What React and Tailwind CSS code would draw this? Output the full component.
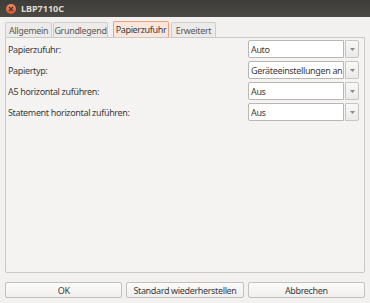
import React from "react";

const font = { fontFamily: '"Noto Sans", "DejaVu Sans", sans-serif' };

function Combo({ value }) {
  return (
    <div className="flex h-[18px] w-[111px]">
      <div className="flex-1 flex items-center border border-[#b9b7b3] bg-white pl-[2px] rounded-l-[2px] overflow-hidden whitespace-nowrap text-[#3c3c3c]">
        {value}
      </div>
      <div className="w-[14px] ml-[1px] border border-[#c7c5c1] bg-gradient-to-b from-[#f8f8f7] to-[#ebeae8] rounded-r-[2px] flex items-center justify-center">
        <svg width="5" height="3" viewBox="0 0 5 3"><path d="M0 0h5L2.5 3z" fill="#8a8a8a" /></svg>
      </div>
    </div>
  );
}

function Row({ label, value }) {
  return (
    <div className="flex items-center justify-between h-[18px]">
      <span className="pl-[1px] text-[#3c3c3c]">{label}</span>
      <Combo value={value} />
    </div>
  );
}

function Tab({ children, active, w }) {
  return active ? (
    <div className={`h-[17px] flex items-center justify-center border border-[#f0a080] bg-[#fbe6da] rounded-t-[2px] text-[#3c3c3c] -mb-px ${w}`}>
      {children}
    </div>
  ) : (
    <div className={`h-[15px] flex items-center justify-center border border-[#cfcdca] border-b-0 bg-[#ecebe9] rounded-t-[2px] text-[#5a5a5a] ${w}`}>
      {children}
    </div>
  );
}

function Btn({ children }) {
  return (
    <div className="h-[16px] flex-1 flex items-center justify-center border border-[#c3c1bd] bg-gradient-to-b from-[#fbfbfa] to-[#f0efed] rounded-[2px] text-[#3c3c3c]">
      {children}
    </div>
  );
}

export default function App() {
  return (
    <div className="w-[370px] h-[303px] bg-[#f2f1f0] flex flex-col text-[9px] leading-none tracking-[-0.35px]" style={font}>
      <div className="h-[17px] bg-gradient-to-b from-[#3d3c38] to-[#4a4944] flex items-center pl-[6px]">
        <div className="w-[10px] h-[10px] rounded-full bg-gradient-to-b from-[#f58a5c] to-[#e0502a] flex items-center justify-center">
          <svg width="6" height="6" viewBox="0 0 6 6"><path d="M1 1L5 5M5 1L1 5" stroke="#3c3b37" strokeWidth="1.3" /></svg>
        </div>
        <span className="ml-[5px] font-bold text-[#dfdbd2] tracking-normal">LBP7110C</span>
      </div>
      <div className="flex items-end gap-[1px] pl-[5px] mt-[3px] h-[17px]">
        <Tab w="w-[47px]">Allgemein</Tab>
        <Tab w="w-[55px]">Grundlegend</Tab>
        <div className="w-[3px]" />
        <Tab active w="w-[56px]">Papierzufuhr</Tab>
        <div className="w-0" />
        <Tab w="w-[45px]">Erweitert</Tab>
      </div>
      <div className="mx-[5px] h-[236px] border border-[#cbc9c6] bg-[#f4f3f2] rounded-b-[2px] flex flex-col gap-[3px] pt-[2px] pl-[1px] pr-[5px]">
        <Row label="Papierzufuhr:" value="Auto" />
        <Row label="Papiertyp:" value="Geräteeinstellungen an" />
        <Row label="A5 horizontal zuführen:" value="Aus" />
        <Row label="Statement horizontal zuführen:" value="Aus" />
      </div>
      <div className="flex gap-[4px] px-[5px] mt-[9px]">
        <Btn>OK</Btn>
        <Btn>Standard wiederherstellen</Btn>
        <Btn>Abbrechen</Btn>
      </div>
    </div>
  );
}
